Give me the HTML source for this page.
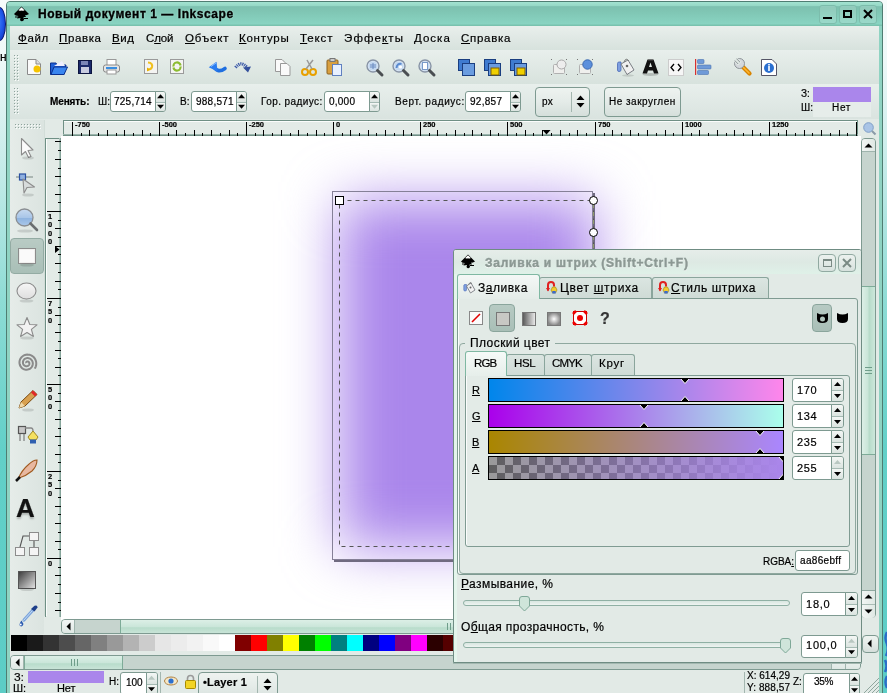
<!DOCTYPE html><html><head><meta charset="utf-8"><style>
*{margin:0;padding:0;box-sizing:border-box}
html,body{-webkit-font-smoothing:antialiased;width:887px;height:693px;overflow:hidden;position:relative;background:#f2f8f8;font-family:"Liberation Sans",sans-serif;font-size:12px;color:#000}
.ab{position:absolute}
.t{position:absolute;white-space:pre;line-height:1;will-change:transform;-webkit-text-stroke:0.2px currentColor}
u{text-decoration:underline;text-underline-offset:1px;text-decoration-thickness:1px}
.ent{position:absolute;background:#fff;border:1px solid #7e9a91;border-radius:3px 0 0 3px}
.spb{position:absolute;border:1px solid #7e9a91;border-radius:0 3px 3px 0;background:linear-gradient(180deg,#f0f4f2,#d9e2de)}
.btn{position:absolute;border:1px solid #7e9a91;border-radius:4px;background:linear-gradient(180deg,#eef3f0 0,#e4ebe8 50%,#d5dfdb 100%)}
svg{position:absolute;overflow:visible}
</style></head><body>
<div class="ab" style="left:0px;top:0px;width:887px;height:693px;background:linear-gradient(180deg,#f7fbfb 0,#eef8f8 60px,#c8ecea 160px,#8edcd5 300px,#62d0c8 450px,#5ccdc6 693px)"></div>
<div class="ab" style="left:-7px;top:7px;width:13px;height:34px;border-radius:50%;border:1px solid #0a1470;background:radial-gradient(ellipse at 40% 45%,#3a7cf8 0,#1f56e8 50%,#1038c0 85%,#0a1e90 100%)"></div>
<div class="t" style="left:0px;top:51px;font-size:12px;color:#000;">н</div>
<svg style="left:883px;top:630px;" width="6" height="63" viewBox="0 0 6 63"><path d="M4 2 Q1 8 4 14 Q6 20 3 26 M2 30 Q5 36 2 42 M4 46 Q1 52 4 58" stroke="#2a6ec8" stroke-width="2.5" fill="none"/></svg>
<div class="ab" style="left:6px;top:1px;width:877px;height:700px;background:#8fd3c2;border:1px solid #4f7d72;border-radius:4px 4px 0 0"></div>
<div class="ab" style="left:7px;top:2px;width:875px;height:24px;background:linear-gradient(180deg,#a3e3d1 0px,#95d7c5 4px,#7dc1b0 4.6px,#7fc5b3 9px,#89d4c2 22px,#79c2ae 23px,#79c2ae 24px);border-radius:3px 3px 0 0"></div>
<div class="ab" style="left:10px;top:26px;width:869px;height:670px;background:#e2eae6"></div>
<svg style="left:13px;top:6px;" width="17" height="17" viewBox="0 0 17 17"><path d="M8.5 0.5 L16 8 Q14 9.5 12 9 L13 11 L10.5 11 L11 14 Q8.5 16.5 7 14 L7.5 12 L4 12.5 L5.5 10 Q2 10 1 8 Z" fill="#000"/><path d="M8.5 1.2 L11.5 4.2 Q9.5 5.2 8.5 4.4 Q7.5 5.2 5.5 4.2 Z" fill="#fff"/><path d="M2 11 H6 M11 12.5 H15" stroke="#000" stroke-width="1"/></svg>
<div class="t" style="left:38px;top:8px;font-size:12px;color:#000;font-weight:bold;letter-spacing:0.56px;-webkit-text-stroke:0.35px #000;text-shadow:0 0 2px #c8f2e8">Новый документ 1 — Inkscape</div>
<div class="ab" style="left:819px;top:5px;width:18px;height:19px;border:1px solid #7cbdac;border-radius:3px;background:rgba(255,255,255,0.15)"></div>
<div class="ab" style="left:839px;top:5px;width:18px;height:19px;border:1px solid #7cbdac;border-radius:3px;background:rgba(255,255,255,0.15)"></div>
<div class="ab" style="left:859px;top:5px;width:18px;height:19px;border:1px solid #7cbdac;border-radius:3px;background:rgba(255,255,255,0.15)"></div>
<div class="ab" style="left:823px;top:17px;width:9px;height:2px;background:#000"></div>
<div class="ab" style="left:843px;top:10px;width:9px;height:8px;border:2px solid #000"></div>
<svg style="left:863px;top:9px;" width="10" height="10" viewBox="0 0 10 10"><path d="M1 1 L9 9 M9 1 L1 9" stroke="#000" stroke-width="2"/></svg>
<div class="ab" style="left:10px;top:26px;width:869px;height:24px;background:linear-gradient(180deg,#e9efec,#d7e2dd)"></div>
<div class="t" style="left:18px;top:33px;font-size:11.5px;color:#000;letter-spacing:0.67px;"><u>Ф</u>айл</div>
<div class="t" style="left:59px;top:33px;font-size:11.5px;color:#000;letter-spacing:0.63px;"><u>П</u>равка</div>
<div class="t" style="left:112px;top:33px;font-size:11.5px;color:#000;letter-spacing:0.59px;"><u>В</u>ид</div>
<div class="t" style="left:146px;top:33px;font-size:11.5px;color:#000;letter-spacing:-0.16px;">С<u>л</u>ой</div>
<div class="t" style="left:185px;top:33px;font-size:11.5px;color:#000;letter-spacing:0.87px;"><u>О</u>бъект</div>
<div class="t" style="left:239px;top:33px;font-size:11.5px;color:#000;letter-spacing:0.76px;"><u>К</u>онтуры</div>
<div class="t" style="left:300px;top:33px;font-size:11.5px;color:#000;letter-spacing:0.86px;"><u>Т</u>екст</div>
<div class="t" style="left:344px;top:33px;font-size:11.5px;color:#000;letter-spacing:1.12px;">Эффе<u>к</u>ты</div>
<div class="t" style="left:414px;top:33px;font-size:11.5px;color:#000;letter-spacing:1.01px;"><u>Д</u>оска</div>
<div class="t" style="left:461px;top:33px;font-size:11.5px;color:#000;letter-spacing:0.70px;"><u>С</u>правка</div>
<div class="ab" style="left:10px;top:50px;width:869px;height:34px;background:linear-gradient(180deg,#e8efec,#d7e2dd)"></div>
<div class="ab" style="left:10px;top:84px;width:869px;height:36px;background:linear-gradient(180deg,#e8efec,#d9e3df)"></div>
<svg style="left:14px;top:55px;" width="6" height="27" viewBox="0 0 6 27"><rect x="0" y="0" width="1" height="1" fill="#8ea39c"/><rect x="1" y="1" width="1" height="1" fill="#fbfdfc"/><rect x="0" y="3" width="1" height="1" fill="#8ea39c"/><rect x="1" y="4" width="1" height="1" fill="#fbfdfc"/><rect x="0" y="6" width="1" height="1" fill="#8ea39c"/><rect x="1" y="7" width="1" height="1" fill="#fbfdfc"/><rect x="0" y="9" width="1" height="1" fill="#8ea39c"/><rect x="1" y="10" width="1" height="1" fill="#fbfdfc"/><rect x="0" y="12" width="1" height="1" fill="#8ea39c"/><rect x="1" y="13" width="1" height="1" fill="#fbfdfc"/><rect x="0" y="15" width="1" height="1" fill="#8ea39c"/><rect x="1" y="16" width="1" height="1" fill="#fbfdfc"/><rect x="0" y="18" width="1" height="1" fill="#8ea39c"/><rect x="1" y="19" width="1" height="1" fill="#fbfdfc"/><rect x="0" y="21" width="1" height="1" fill="#8ea39c"/><rect x="1" y="22" width="1" height="1" fill="#fbfdfc"/><rect x="0" y="24" width="1" height="1" fill="#8ea39c"/><rect x="1" y="25" width="1" height="1" fill="#fbfdfc"/><rect x="3" y="0" width="1" height="1" fill="#8ea39c"/><rect x="4" y="1" width="1" height="1" fill="#fbfdfc"/><rect x="3" y="3" width="1" height="1" fill="#8ea39c"/><rect x="4" y="4" width="1" height="1" fill="#fbfdfc"/><rect x="3" y="6" width="1" height="1" fill="#8ea39c"/><rect x="4" y="7" width="1" height="1" fill="#fbfdfc"/><rect x="3" y="9" width="1" height="1" fill="#8ea39c"/><rect x="4" y="10" width="1" height="1" fill="#fbfdfc"/><rect x="3" y="12" width="1" height="1" fill="#8ea39c"/><rect x="4" y="13" width="1" height="1" fill="#fbfdfc"/><rect x="3" y="15" width="1" height="1" fill="#8ea39c"/><rect x="4" y="16" width="1" height="1" fill="#fbfdfc"/><rect x="3" y="18" width="1" height="1" fill="#8ea39c"/><rect x="4" y="19" width="1" height="1" fill="#fbfdfc"/><rect x="3" y="21" width="1" height="1" fill="#8ea39c"/><rect x="4" y="22" width="1" height="1" fill="#fbfdfc"/><rect x="3" y="24" width="1" height="1" fill="#8ea39c"/><rect x="4" y="25" width="1" height="1" fill="#fbfdfc"/></svg>
<svg style="left:14px;top:88px;" width="6" height="27" viewBox="0 0 6 27"><rect x="0" y="0" width="1" height="1" fill="#8ea39c"/><rect x="1" y="1" width="1" height="1" fill="#fbfdfc"/><rect x="0" y="3" width="1" height="1" fill="#8ea39c"/><rect x="1" y="4" width="1" height="1" fill="#fbfdfc"/><rect x="0" y="6" width="1" height="1" fill="#8ea39c"/><rect x="1" y="7" width="1" height="1" fill="#fbfdfc"/><rect x="0" y="9" width="1" height="1" fill="#8ea39c"/><rect x="1" y="10" width="1" height="1" fill="#fbfdfc"/><rect x="0" y="12" width="1" height="1" fill="#8ea39c"/><rect x="1" y="13" width="1" height="1" fill="#fbfdfc"/><rect x="0" y="15" width="1" height="1" fill="#8ea39c"/><rect x="1" y="16" width="1" height="1" fill="#fbfdfc"/><rect x="0" y="18" width="1" height="1" fill="#8ea39c"/><rect x="1" y="19" width="1" height="1" fill="#fbfdfc"/><rect x="0" y="21" width="1" height="1" fill="#8ea39c"/><rect x="1" y="22" width="1" height="1" fill="#fbfdfc"/><rect x="0" y="24" width="1" height="1" fill="#8ea39c"/><rect x="1" y="25" width="1" height="1" fill="#fbfdfc"/><rect x="3" y="0" width="1" height="1" fill="#8ea39c"/><rect x="4" y="1" width="1" height="1" fill="#fbfdfc"/><rect x="3" y="3" width="1" height="1" fill="#8ea39c"/><rect x="4" y="4" width="1" height="1" fill="#fbfdfc"/><rect x="3" y="6" width="1" height="1" fill="#8ea39c"/><rect x="4" y="7" width="1" height="1" fill="#fbfdfc"/><rect x="3" y="9" width="1" height="1" fill="#8ea39c"/><rect x="4" y="10" width="1" height="1" fill="#fbfdfc"/><rect x="3" y="12" width="1" height="1" fill="#8ea39c"/><rect x="4" y="13" width="1" height="1" fill="#fbfdfc"/><rect x="3" y="15" width="1" height="1" fill="#8ea39c"/><rect x="4" y="16" width="1" height="1" fill="#fbfdfc"/><rect x="3" y="18" width="1" height="1" fill="#8ea39c"/><rect x="4" y="19" width="1" height="1" fill="#fbfdfc"/><rect x="3" y="21" width="1" height="1" fill="#8ea39c"/><rect x="4" y="22" width="1" height="1" fill="#fbfdfc"/><rect x="3" y="24" width="1" height="1" fill="#8ea39c"/><rect x="4" y="25" width="1" height="1" fill="#fbfdfc"/></svg>
<svg style="left:27px;top:59px;" width="14" height="16" viewBox="0 0 14 16"><path d="M0.5 0.5 H9 L13.5 5 V15.5 H0.5 Z" fill="#fafafa" stroke="#8a8a8a"/><path d="M9 0.5 V5 H13.5" fill="#ddd" stroke="#8a8a8a"/></svg>
<svg style="left:33px;top:65px;" width="8" height="8" viewBox="0 0 8 8"><circle cx="4" cy="4" r="3.5" fill="#f5c400"/></svg>
<svg style="left:50px;top:60px;" width="18" height="15" viewBox="0 0 18 15"><path d="M0.5 3 H6 L7 5 H16 L14 14.5 H0.5 Z" fill="#1f5fd6" stroke="#0a3090"/><path d="M4 6 L12 1 L15 6 Z" fill="#eef"/><path d="M1 14.5 L4 7 H17.5 L14 14.5 Z" fill="#3a86f0" stroke="#0a3090"/></svg>
<svg style="left:78px;top:60px;" width="14" height="14" viewBox="0 0 14 14"><rect x="0.5" y="0.5" width="13" height="13" fill="#1b2a6b" stroke="#0d1540"/><rect x="3" y="7" width="8" height="6" fill="#c8cce0"/><rect x="3" y="1" width="7" height="4" fill="#7b86b8"/></svg>
<svg style="left:103px;top:59px;" width="17" height="16" viewBox="0 0 17 16"><rect x="4" y="0.5" width="9" height="7" fill="#fff" stroke="#999"/><rect x="0.5" y="6" width="16" height="7" rx="2" fill="#e6e6e6" stroke="#888"/><rect x="3" y="8" width="11" height="2" fill="#3a8ee0"/><rect x="4" y="11" width="9" height="4" fill="#fff" stroke="#999"/></svg>
<svg style="left:144px;top:59px;" width="14" height="15" viewBox="0 0 14 15"><rect x="0.5" y="0.5" width="13" height="14" fill="#f4f4f2" stroke="#9a9a9a"/><path d="M4 3.5 Q9 4 8 8 Q7 11 3.5 10.5" stroke="#f0c020" stroke-width="2.2" fill="none"/><path d="M6 10.5 L3 12.5 L3 8.5 Z" fill="#e8b000"/></svg>
<svg style="left:170px;top:59px;" width="14" height="15" viewBox="0 0 14 15"><rect x="0.5" y="0.5" width="13" height="14" fill="#f4f4f2" stroke="#9a9a9a"/><path d="M3.5 7.5 A3.5 3.5 0 0 1 10.5 6.5 M10.5 7.5 A3.5 3.5 0 0 1 3.5 8.5" stroke="#8cbc30" stroke-width="2.2" fill="none"/></svg>
<svg style="left:208px;top:61px;" width="18" height="12" viewBox="0 0 18 12"><path d="M6 6 Q10 12.5 17 7.5" stroke="#1f6fe0" stroke-width="3.6" fill="none" stroke-linecap="round"/><path d="M0.8 6.2 L8.5 0.8 L9.5 10.5 Z" fill="#2a7cf0"/><path d="M3 5.5 L8 2" stroke="#8ec0ff" stroke-width="1"/></svg>
<svg style="left:234px;top:61px;" width="18" height="12" viewBox="0 0 18 12"><path d="M1.5 6.5 Q7 -0.5 12.5 6" stroke="#3a58a8" stroke-width="3.2" fill="none" stroke-dasharray="1.2 0.8"/><path d="M9 6.5 L17 5.5 L14 11.5 Z" fill="#34509c"/></svg>
<svg style="left:275px;top:59px;" width="16" height="17" viewBox="0 0 16 17"><path d="M0.5 0.5 H7 L10 3.5 V12.5 H0.5 Z" fill="#fafafa" stroke="#999"/><path d="M5.5 4.5 H12 L15 7.5 V16.5 H5.5 Z" fill="#fafafa" stroke="#999"/></svg>
<svg style="left:301px;top:59px;" width="16" height="17" viewBox="0 0 16 17"><circle cx="4" cy="13" r="3" fill="none" stroke="#e8a000" stroke-width="2"/><circle cx="12" cy="13" r="3" fill="none" stroke="#e8a000" stroke-width="2"/><path d="M5 10 L12 1 M11 10 L6 1" stroke="#999" stroke-width="1.5"/></svg>
<svg style="left:326px;top:58px;" width="17" height="18" viewBox="0 0 17 18"><rect x="1" y="2" width="11" height="14" rx="1" fill="#d9a040" stroke="#8a6020"/><rect x="4" y="0.5" width="5" height="3" fill="#ccc" stroke="#777"/><rect x="6.5" y="6.5" width="9" height="11" fill="#e8f0ff" stroke="#6080c0"/></svg>
<svg style="left:366px;top:59px;" width="18" height="18" viewBox="0 0 18 18"><circle cx="7" cy="7" r="6" fill="#dce8f6" stroke="#8894a6" stroke-width="1.4"/><circle cx="7" cy="7" r="4.6" fill="#c4d8f0"/><path d="M4 6 H10 M4 8 H10 M7 4 V10" stroke="#6a8ac0" stroke-width="1"/><path d="M11.5 11.5 L16 16" stroke="#4a4e52" stroke-width="3" stroke-linecap="round"/></svg>
<svg style="left:392px;top:59px;" width="18" height="18" viewBox="0 0 18 18"><circle cx="7" cy="7" r="6" fill="#dce8f6" stroke="#8894a6" stroke-width="1.4"/><circle cx="7" cy="7" r="4.6" fill="#c4d8f0"/><path d="M4.5 9 Q5 4 9.5 5" stroke="#5a8ad0" stroke-width="2" fill="none"/><circle cx="8.5" cy="8" r="1.6" fill="#fff"/><path d="M11.5 11.5 L16 16" stroke="#4a4e52" stroke-width="3" stroke-linecap="round"/></svg>
<svg style="left:418px;top:59px;" width="18" height="18" viewBox="0 0 18 18"><circle cx="7" cy="7" r="6" fill="#dce8f6" stroke="#8894a6" stroke-width="1.4"/><circle cx="7" cy="7" r="4.6" fill="#c4d8f0"/><rect x="4.5" y="3.5" width="5" height="7" fill="#fff" stroke="#7a9ac8"/><path d="M11.5 11.5 L16 16" stroke="#4a4e52" stroke-width="3" stroke-linecap="round"/></svg>
<svg style="left:458px;top:59px;" width="17" height="17" viewBox="0 0 17 17"><rect x="0.5" y="0.5" width="11" height="11" fill="#3f7bd0" stroke="#1a3e80"/><rect x="4.5" y="4.5" width="12" height="12" fill="#6a9ce0" stroke="#1a3e80"/></svg>
<svg style="left:484px;top:59px;" width="17" height="17" viewBox="0 0 17 17"><rect x="0.5" y="0.5" width="11" height="11" fill="#3f7bd0" stroke="#1a3e80"/><rect x="4.5" y="4.5" width="12" height="12" fill="#6a9ce0" stroke="#1a3e80"/><rect x="7" y="9" width="8" height="7" fill="#f0d000" stroke="#806000"/></svg>
<svg style="left:510px;top:59px;" width="17" height="17" viewBox="0 0 17 17"><rect x="0.5" y="0.5" width="11" height="11" fill="#3f7bd0" stroke="#1a3e80"/><rect x="4.5" y="4.5" width="12" height="12" fill="#6a9ce0" stroke="#1a3e80"/><rect x="7" y="9" width="8" height="7" fill="#f0d000" stroke="#806000"/></svg>
<svg style="left:551px;top:59px;" width="17" height="17" viewBox="0 0 17 17"><rect x="0" y="0" width="1" height="1" fill="#777"/><rect x="15" y="0" width="1" height="1" fill="#777"/><rect x="0" y="15" width="1" height="1" fill="#777"/><rect x="15" y="15" width="1" height="1" fill="#777"/><rect x="2.5" y="5.5" width="11" height="9" rx="1" fill="#efefed" stroke="#b0b0b0"/><circle cx="10.5" cy="5.5" r="4.5" fill="#ededed" stroke="#a8a8a8"/></svg>
<svg style="left:577px;top:59px;" width="17" height="17" viewBox="0 0 17 17"><rect x="0" y="0" width="1" height="1" fill="#777"/><rect x="15" y="0" width="1" height="1" fill="#777"/><rect x="0" y="15" width="1" height="1" fill="#777"/><rect x="15" y="15" width="1" height="1" fill="#777"/><rect x="2.5" y="5.5" width="11" height="9" rx="1" fill="#efefed" stroke="#b0b0b0"/><circle cx="10.5" cy="5.5" r="4.7" fill="#5b8fdc" stroke="#3b68b0"/></svg>
<svg style="left:616px;top:58px;" width="20" height="19" viewBox="0 0 20 19"><path d="M1.5 5.5 Q1.5 4 3 4 H5 V12 Q5 13.5 3 13.5 Q1.5 13.5 1.5 12 Z" fill="#7e9fe0" stroke="#4a6ab8" stroke-width="0.8"/><path d="M5 6 L12 2 L18 12 L11 16.5 Z" fill="#f0f0f0" stroke="#7a7e84" stroke-width="1"/><path d="M8 4 Q10 -1 13 3" stroke="#777" stroke-width="1" fill="none"/><circle cx="11" cy="8" r="1.3" fill="#666"/><ellipse cx="12" cy="17.5" rx="6" ry="1.2" fill="#000" opacity="0.12"/></svg>
<svg style="left:642px;top:59px;" width="17" height="17" viewBox="0 0 17 17"><ellipse cx="8.5" cy="15.5" rx="8" ry="1.5" fill="#000" opacity="0.18"/><path d="M5.5 0.5 H11.5 L16.5 14.5 H12 L11 11.5 H6 L5 14.5 H0.5 Z M7 8 H10 L8.5 3.5 Z" fill="#111" fill-rule="evenodd"/><path d="M6 1 H11" stroke="#666" stroke-width="0.8"/></svg>
<svg style="left:668px;top:59px;" width="16" height="17" viewBox="0 0 16 17"><rect x="0.5" y="0.5" width="15" height="16" fill="#f6f6f6" stroke="#ccc"/><path d="M6 5 L3 8.5 L6 12 M10 5 L13 8.5 L10 12" stroke="#000" stroke-width="1.3" fill="none"/></svg>
<svg style="left:695px;top:59px;" width="17" height="17" viewBox="0 0 17 17"><rect x="0" y="0" width="1.2" height="16" fill="#d83030"/><rect x="2.5" y="0.5" width="6.5" height="4" rx="0.8" fill="#6f9ad8" stroke="#4a72b0" stroke-width="0.6"/><rect x="2.5" y="6" width="13.5" height="4" rx="0.8" fill="#6f9ad8" stroke="#4a72b0" stroke-width="0.6"/><rect x="2.5" y="11.5" width="11" height="4" rx="0.8" fill="#6f9ad8" stroke="#4a72b0" stroke-width="0.6"/></svg>
<svg style="left:734px;top:58px;" width="18" height="18" viewBox="0 0 18 18"><path d="M8 8 L15.5 15.5" stroke="#d88400" stroke-width="4.2" stroke-linecap="round"/><path d="M8.5 8.5 L15 15" stroke="#ffb630" stroke-width="1.6" stroke-linecap="round"/><circle cx="5.5" cy="5.5" r="5" fill="#d4d8dc" stroke="#858b90" stroke-width="0.9"/><path d="M0 3.5 L3.5 0 L7.5 4 L4 7.5 Z" fill="#e0e8e4"/><path d="M0.8 2.6 L4.2 6 M2.6 0.8 L6 4.2" stroke="#858b90" stroke-width="0.9"/></svg>
<svg style="left:761px;top:59px;" width="16" height="17" viewBox="0 0 16 17"><path d="M0.5 0.5 H11 L15.5 5 V16.5 H0.5 Z" fill="#fff" stroke="#556"/><circle cx="8" cy="9" r="5" fill="#2a6fd0"/><rect x="7.2" y="7" width="1.6" height="5" fill="#fff"/><rect x="7.2" y="5" width="1.6" height="1.5" fill="#fff"/></svg>
<div class="t" style="left:50px;top:97px;font-size:10px;color:#000;font-weight:bold;letter-spacing:-0.11px;">Менять:</div>
<div class="t" style="left:98px;top:97px;font-size:10px;color:#000;">Ш:</div>
<div class="ent" style="left:110px;top:91px;width:46px;height:21px"></div>
<div class="ab" style="left:155px;top:91px;width:11px;height:21px;border:1px solid #7e9a91;border-radius:0 3px 3px 0;overflow:hidden"><div style="height:50%;background:linear-gradient(180deg,#f4f7f5,#dbe4e0)"></div><div style="height:50%;border-top:1px solid #a5bab3;background:linear-gradient(180deg,#f4f7f5,#dbe4e0)"></div></div>
<svg style="left:157px;top:91px;" width="7" height="21" viewBox="0 0 7 21"><path d="M0 7.2 L3.5 3.2 L7 7.2 Z" fill="#000"/><path d="M0 13.8 L3.5 17.8 L7 13.8 Z" fill="#000"/></svg>
<div class="t" style="left:114px;top:97px;font-size:10px;color:#000;letter-spacing:0.24px;">725,714</div>
<div class="t" style="left:180px;top:97px;font-size:10px;color:#000;">В:</div>
<div class="ent" style="left:191px;top:91px;width:46px;height:21px"></div>
<div class="ab" style="left:236px;top:91px;width:11px;height:21px;border:1px solid #7e9a91;border-radius:0 3px 3px 0;overflow:hidden"><div style="height:50%;background:linear-gradient(180deg,#f4f7f5,#dbe4e0)"></div><div style="height:50%;border-top:1px solid #a5bab3;background:linear-gradient(180deg,#f4f7f5,#dbe4e0)"></div></div>
<svg style="left:238px;top:91px;" width="7" height="21" viewBox="0 0 7 21"><path d="M0 7.2 L3.5 3.2 L7 7.2 Z" fill="#000"/><path d="M0 13.8 L3.5 17.8 L7 13.8 Z" fill="#000"/></svg>
<div class="t" style="left:196px;top:97px;font-size:10px;color:#000;letter-spacing:0.24px;">988,571</div>
<div class="t" style="left:261px;top:97px;font-size:10px;color:#000;letter-spacing:0.42px;">Гор. радиус:</div>
<div class="ent" style="left:324px;top:91px;width:46px;height:21px"></div>
<div class="ab" style="left:369px;top:91px;width:11px;height:21px;border:1px solid #7e9a91;border-radius:0 3px 3px 0;overflow:hidden"><div style="height:50%;background:linear-gradient(180deg,#f4f7f5,#dbe4e0)"></div><div style="height:50%;border-top:1px solid #a5bab3;background:linear-gradient(180deg,#f4f7f5,#dbe4e0)"></div></div>
<svg style="left:371px;top:91px;" width="7" height="21" viewBox="0 0 7 21"><path d="M0 7.2 L3.5 3.2 L7 7.2 Z" fill="#000"/><path d="M0 13.8 L3.5 17.8 L7 13.8 Z" fill="#b8c7c1"/></svg>
<div class="t" style="left:329px;top:97px;font-size:10px;color:#000;letter-spacing:0.24px;">0,000</div>
<div class="t" style="left:395px;top:97px;font-size:10px;color:#000;letter-spacing:0.62px;">Верт. радиус:</div>
<div class="ent" style="left:465px;top:91px;width:46px;height:21px"></div>
<div class="ab" style="left:510px;top:91px;width:11px;height:21px;border:1px solid #7e9a91;border-radius:0 3px 3px 0;overflow:hidden"><div style="height:50%;background:linear-gradient(180deg,#f4f7f5,#dbe4e0)"></div><div style="height:50%;border-top:1px solid #a5bab3;background:linear-gradient(180deg,#f4f7f5,#dbe4e0)"></div></div>
<svg style="left:512px;top:91px;" width="7" height="21" viewBox="0 0 7 21"><path d="M0 7.2 L3.5 3.2 L7 7.2 Z" fill="#000"/><path d="M0 13.8 L3.5 17.8 L7 13.8 Z" fill="#000"/></svg>
<div class="t" style="left:470px;top:97px;font-size:10px;color:#000;letter-spacing:0.28px;">92,857</div>
<div class="btn" style="left:535px;top:87px;width:55px;height:30px"></div>
<div class="t" style="left:542px;top:97px;font-size:10px;color:#000;letter-spacing:0.14px;">px</div>
<div class="ab" style="left:571px;top:92px;width:1px;height:20px;background:#a3b6af"></div>
<svg style="left:576px;top:95px;" width="9" height="13" viewBox="0 0 9 13"><path d="M0.5 5 L4.5 0.5 L8.5 5 Z M0.5 8 L4.5 12.5 L8.5 8 Z" fill="#000"/></svg>
<div class="btn" style="left:604px;top:87px;width:77px;height:30px"></div>
<div class="t" style="left:609px;top:97px;font-size:10px;color:#000;letter-spacing:0.49px;">Не закруглен</div>
<div class="ab" style="left:813px;top:87px;width:58px;height:15px;background:#aa86eb"></div>
<div class="ab" style="left:813px;top:102px;width:58px;height:15px;background:#e6edea"></div>
<div class="t" style="left:801px;top:89px;font-size:10px;color:#000;">З:</div>
<div class="t" style="left:801px;top:103px;font-size:10px;color:#000;">Ш:</div>
<div class="t" style="left:832px;top:103px;font-size:10px;color:#000;letter-spacing:0.68px;">Нет</div>
<div class="ab" style="left:10px;top:119px;width:869px;height:577px;background:#e2eae6"></div>
<div class="ab" style="left:63px;top:120px;width:795px;height:16px;background:#e3ebe7;border:1px solid #6f9085;border-bottom:none;border-right:1px solid #6f9085"></div>
<div class="ab" style="left:64px;top:121px;width:793px;height:1px;background:#fbfdfc"></div>
<div class="ab" style="left:63px;top:134px;width:795px;height:1px;background:#9bb5ac"></div>
<div class="ab" style="left:63px;top:135px;width:795px;height:1px;background:#6f8f85"></div>
<svg style="left:63px;top:122px;" width="795" height="14" viewBox="0 0 795 14"><rect x="9" y="0" width="1" height="14" fill="#000"/><rect x="18" y="11" width="1" height="3" fill="#000"/><rect x="26" y="8" width="1" height="6" fill="#000"/><rect x="35" y="11" width="1" height="3" fill="#000"/><rect x="44" y="8" width="1" height="6" fill="#000"/><rect x="53" y="11" width="1" height="3" fill="#000"/><rect x="61" y="8" width="1" height="6" fill="#000"/><rect x="70" y="11" width="1" height="3" fill="#000"/><rect x="79" y="8" width="1" height="6" fill="#000"/><rect x="87" y="11" width="1" height="3" fill="#000"/><rect x="96" y="0" width="1" height="14" fill="#000"/><rect x="105" y="11" width="1" height="3" fill="#000"/><rect x="113" y="8" width="1" height="6" fill="#000"/><rect x="122" y="11" width="1" height="3" fill="#000"/><rect x="131" y="8" width="1" height="6" fill="#000"/><rect x="139" y="11" width="1" height="3" fill="#000"/><rect x="148" y="8" width="1" height="6" fill="#000"/><rect x="157" y="11" width="1" height="3" fill="#000"/><rect x="166" y="8" width="1" height="6" fill="#000"/><rect x="174" y="11" width="1" height="3" fill="#000"/><rect x="183" y="0" width="1" height="14" fill="#000"/><rect x="192" y="11" width="1" height="3" fill="#000"/><rect x="200" y="8" width="1" height="6" fill="#000"/><rect x="209" y="11" width="1" height="3" fill="#000"/><rect x="218" y="8" width="1" height="6" fill="#000"/><rect x="227" y="11" width="1" height="3" fill="#000"/><rect x="235" y="8" width="1" height="6" fill="#000"/><rect x="244" y="11" width="1" height="3" fill="#000"/><rect x="253" y="8" width="1" height="6" fill="#000"/><rect x="261" y="11" width="1" height="3" fill="#000"/><rect x="270" y="0" width="1" height="14" fill="#000"/><rect x="279" y="11" width="1" height="3" fill="#000"/><rect x="287" y="8" width="1" height="6" fill="#000"/><rect x="296" y="11" width="1" height="3" fill="#000"/><rect x="305" y="8" width="1" height="6" fill="#000"/><rect x="313" y="11" width="1" height="3" fill="#000"/><rect x="322" y="8" width="1" height="6" fill="#000"/><rect x="331" y="11" width="1" height="3" fill="#000"/><rect x="340" y="8" width="1" height="6" fill="#000"/><rect x="348" y="11" width="1" height="3" fill="#000"/><rect x="357" y="0" width="1" height="14" fill="#000"/><rect x="366" y="11" width="1" height="3" fill="#000"/><rect x="374" y="8" width="1" height="6" fill="#000"/><rect x="383" y="11" width="1" height="3" fill="#000"/><rect x="392" y="8" width="1" height="6" fill="#000"/><rect x="401" y="11" width="1" height="3" fill="#000"/><rect x="409" y="8" width="1" height="6" fill="#000"/><rect x="418" y="11" width="1" height="3" fill="#000"/><rect x="427" y="8" width="1" height="6" fill="#000"/><rect x="435" y="11" width="1" height="3" fill="#000"/><rect x="444" y="0" width="1" height="14" fill="#000"/><rect x="453" y="11" width="1" height="3" fill="#000"/><rect x="462" y="8" width="1" height="6" fill="#000"/><rect x="470" y="11" width="1" height="3" fill="#000"/><rect x="479" y="8" width="1" height="6" fill="#000"/><rect x="488" y="11" width="1" height="3" fill="#000"/><rect x="497" y="8" width="1" height="6" fill="#000"/><rect x="506" y="11" width="1" height="3" fill="#000"/><rect x="514" y="8" width="1" height="6" fill="#000"/><rect x="523" y="11" width="1" height="3" fill="#000"/><rect x="532" y="0" width="1" height="14" fill="#000"/><rect x="541" y="11" width="1" height="3" fill="#000"/><rect x="549" y="8" width="1" height="6" fill="#000"/><rect x="558" y="11" width="1" height="3" fill="#000"/><rect x="567" y="8" width="1" height="6" fill="#000"/><rect x="575" y="11" width="1" height="3" fill="#000"/><rect x="584" y="8" width="1" height="6" fill="#000"/><rect x="593" y="11" width="1" height="3" fill="#000"/><rect x="602" y="8" width="1" height="6" fill="#000"/><rect x="610" y="11" width="1" height="3" fill="#000"/><rect x="619" y="0" width="1" height="14" fill="#000"/><rect x="628" y="11" width="1" height="3" fill="#000"/><rect x="636" y="8" width="1" height="6" fill="#000"/><rect x="645" y="11" width="1" height="3" fill="#000"/><rect x="654" y="8" width="1" height="6" fill="#000"/><rect x="663" y="11" width="1" height="3" fill="#000"/><rect x="671" y="8" width="1" height="6" fill="#000"/><rect x="680" y="11" width="1" height="3" fill="#000"/><rect x="689" y="8" width="1" height="6" fill="#000"/><rect x="697" y="11" width="1" height="3" fill="#000"/><rect x="706" y="0" width="1" height="14" fill="#000"/><rect x="715" y="11" width="1" height="3" fill="#000"/><rect x="723" y="8" width="1" height="6" fill="#000"/><rect x="732" y="11" width="1" height="3" fill="#000"/><rect x="741" y="8" width="1" height="6" fill="#000"/><rect x="749" y="11" width="1" height="3" fill="#000"/><rect x="758" y="8" width="1" height="6" fill="#000"/><rect x="767" y="11" width="1" height="3" fill="#000"/><rect x="776" y="8" width="1" height="6" fill="#000"/><rect x="784" y="11" width="1" height="3" fill="#000"/><rect x="793" y="0" width="1" height="14" fill="#000"/></svg>
<div class="t" style="left:75px;top:121px;font-size:7.5px;color:#000;font-weight:bold;">-750</div>
<div class="t" style="left:162px;top:121px;font-size:7.5px;color:#000;font-weight:bold;">-500</div>
<div class="t" style="left:249px;top:121px;font-size:7.5px;color:#000;font-weight:bold;">-250</div>
<div class="t" style="left:336px;top:121px;font-size:7.5px;color:#000;font-weight:bold;">0</div>
<div class="t" style="left:423px;top:121px;font-size:7.5px;color:#000;font-weight:bold;">250</div>
<div class="t" style="left:510px;top:121px;font-size:7.5px;color:#000;font-weight:bold;">500</div>
<div class="t" style="left:598px;top:121px;font-size:7.5px;color:#000;font-weight:bold;">750</div>
<div class="t" style="left:685px;top:121px;font-size:7.5px;color:#000;font-weight:bold;">1000</div>
<div class="t" style="left:772px;top:121px;font-size:7.5px;color:#000;font-weight:bold;">1250</div>
<svg style="left:542px;top:130px;" width="9" height="5" viewBox="0 0 9 5"><path d="M0.5 0 H8.5 L4.5 4.5 Z" fill="#000"/></svg>
<svg style="left:863px;top:122px;" width="13" height="13" viewBox="0 0 13 13"><circle cx="5.5" cy="5.5" r="4.8" fill="#a9c4e6" stroke="#7f9fc8" stroke-width="1"/><path d="M9 9 L12.5 12.5" stroke="#8a9aa8" stroke-width="2"/></svg>
<div class="ab" style="left:45px;top:138px;width:16px;height:479px;background:#e3ebe7;border:1px solid #6f9085;border-bottom:none;border-right:none"></div>
<div class="ab" style="left:46px;top:139px;width:1px;height:477px;background:#fbfdfc"></div>
<div class="ab" style="left:59px;top:138px;width:1px;height:479px;background:#adc4bc"></div>
<div class="ab" style="left:60px;top:138px;width:1px;height:479px;background:#85a49a"></div>
<svg style="left:47px;top:138px;" width="14" height="479" viewBox="0 0 14 479"><rect x="8" y="3" width="6" height="1" fill="#000"/><rect x="11" y="12" width="3" height="1" fill="#000"/><rect x="8" y="21" width="6" height="1" fill="#000"/><rect x="11" y="30" width="3" height="1" fill="#000"/><rect x="8" y="38" width="6" height="1" fill="#000"/><rect x="11" y="47" width="3" height="1" fill="#000"/><rect x="8" y="56" width="6" height="1" fill="#000"/><rect x="11" y="64" width="3" height="1" fill="#000"/><rect x="0" y="73" width="14" height="1" fill="#000"/><rect x="11" y="82" width="3" height="1" fill="#000"/><rect x="8" y="90" width="6" height="1" fill="#000"/><rect x="11" y="99" width="3" height="1" fill="#000"/><rect x="8" y="108" width="6" height="1" fill="#000"/><rect x="11" y="116" width="3" height="1" fill="#000"/><rect x="8" y="125" width="6" height="1" fill="#000"/><rect x="11" y="134" width="3" height="1" fill="#000"/><rect x="8" y="143" width="6" height="1" fill="#000"/><rect x="11" y="151" width="3" height="1" fill="#000"/><rect x="0" y="160" width="14" height="1" fill="#000"/><rect x="11" y="169" width="3" height="1" fill="#000"/><rect x="8" y="177" width="6" height="1" fill="#000"/><rect x="11" y="186" width="3" height="1" fill="#000"/><rect x="8" y="194" width="6" height="1" fill="#000"/><rect x="11" y="203" width="3" height="1" fill="#000"/><rect x="8" y="212" width="6" height="1" fill="#000"/><rect x="11" y="220" width="3" height="1" fill="#000"/><rect x="8" y="229" width="6" height="1" fill="#000"/><rect x="11" y="237" width="3" height="1" fill="#000"/><rect x="0" y="246" width="14" height="1" fill="#000"/><rect x="11" y="255" width="3" height="1" fill="#000"/><rect x="8" y="263" width="6" height="1" fill="#000"/><rect x="11" y="272" width="3" height="1" fill="#000"/><rect x="8" y="281" width="6" height="1" fill="#000"/><rect x="11" y="290" width="3" height="1" fill="#000"/><rect x="8" y="298" width="6" height="1" fill="#000"/><rect x="11" y="307" width="3" height="1" fill="#000"/><rect x="8" y="316" width="6" height="1" fill="#000"/><rect x="11" y="324" width="3" height="1" fill="#000"/><rect x="0" y="333" width="14" height="1" fill="#000"/><rect x="11" y="342" width="3" height="1" fill="#000"/><rect x="8" y="350" width="6" height="1" fill="#000"/><rect x="11" y="359" width="3" height="1" fill="#000"/><rect x="8" y="368" width="6" height="1" fill="#000"/><rect x="11" y="376" width="3" height="1" fill="#000"/><rect x="8" y="385" width="6" height="1" fill="#000"/><rect x="11" y="394" width="3" height="1" fill="#000"/><rect x="8" y="403" width="6" height="1" fill="#000"/><rect x="11" y="411" width="3" height="1" fill="#000"/><rect x="0" y="420" width="14" height="1" fill="#000"/><rect x="11" y="429" width="3" height="1" fill="#000"/><rect x="8" y="437" width="6" height="1" fill="#000"/><rect x="11" y="446" width="3" height="1" fill="#000"/><rect x="8" y="455" width="6" height="1" fill="#000"/><rect x="11" y="464" width="3" height="1" fill="#000"/><rect x="8" y="472" width="6" height="1" fill="#000"/></svg>
<div class="t" style="left:48px;top:213px;font-size:7.5px;color:#000;font-weight:bold;">1</div>
<div class="t" style="left:48px;top:221px;font-size:7.5px;color:#000;font-weight:bold;">0</div>
<div class="t" style="left:48px;top:230px;font-size:7.5px;color:#000;font-weight:bold;">0</div>
<div class="t" style="left:48px;top:238px;font-size:7.5px;color:#000;font-weight:bold;">0</div>
<div class="t" style="left:48px;top:300px;font-size:7.5px;color:#000;font-weight:bold;">7</div>
<div class="t" style="left:48px;top:308px;font-size:7.5px;color:#000;font-weight:bold;">5</div>
<div class="t" style="left:48px;top:317px;font-size:7.5px;color:#000;font-weight:bold;">0</div>
<div class="t" style="left:48px;top:386px;font-size:7.5px;color:#000;font-weight:bold;">5</div>
<div class="t" style="left:48px;top:394px;font-size:7.5px;color:#000;font-weight:bold;">0</div>
<div class="t" style="left:48px;top:403px;font-size:7.5px;color:#000;font-weight:bold;">0</div>
<div class="t" style="left:48px;top:473px;font-size:7.5px;color:#000;font-weight:bold;">2</div>
<div class="t" style="left:48px;top:481px;font-size:7.5px;color:#000;font-weight:bold;">5</div>
<div class="t" style="left:48px;top:490px;font-size:7.5px;color:#000;font-weight:bold;">0</div>
<div class="t" style="left:48px;top:560px;font-size:7.5px;color:#000;font-weight:bold;">0</div>
<svg style="left:55px;top:246px;" width="5" height="7" viewBox="0 0 5 7"><path d="M0 0 V7 L4.5 3.5 Z" fill="#000"/></svg>
<div class="ab" style="left:10px;top:120px;width:34px;height:514px;background:linear-gradient(90deg,#e6ece9,#dbe4e0)"></div>
<svg style="left:15px;top:124px;" width="27" height="6" viewBox="0 0 27 6"><rect x="0" y="0" width="1" height="1" fill="#8ea39c"/><rect x="1" y="1" width="1" height="1" fill="#fbfdfc"/><rect x="0" y="3" width="1" height="1" fill="#8ea39c"/><rect x="1" y="4" width="1" height="1" fill="#fbfdfc"/><rect x="3" y="0" width="1" height="1" fill="#8ea39c"/><rect x="4" y="1" width="1" height="1" fill="#fbfdfc"/><rect x="3" y="3" width="1" height="1" fill="#8ea39c"/><rect x="4" y="4" width="1" height="1" fill="#fbfdfc"/><rect x="6" y="0" width="1" height="1" fill="#8ea39c"/><rect x="7" y="1" width="1" height="1" fill="#fbfdfc"/><rect x="6" y="3" width="1" height="1" fill="#8ea39c"/><rect x="7" y="4" width="1" height="1" fill="#fbfdfc"/><rect x="9" y="0" width="1" height="1" fill="#8ea39c"/><rect x="10" y="1" width="1" height="1" fill="#fbfdfc"/><rect x="9" y="3" width="1" height="1" fill="#8ea39c"/><rect x="10" y="4" width="1" height="1" fill="#fbfdfc"/><rect x="12" y="0" width="1" height="1" fill="#8ea39c"/><rect x="13" y="1" width="1" height="1" fill="#fbfdfc"/><rect x="12" y="3" width="1" height="1" fill="#8ea39c"/><rect x="13" y="4" width="1" height="1" fill="#fbfdfc"/><rect x="15" y="0" width="1" height="1" fill="#8ea39c"/><rect x="16" y="1" width="1" height="1" fill="#fbfdfc"/><rect x="15" y="3" width="1" height="1" fill="#8ea39c"/><rect x="16" y="4" width="1" height="1" fill="#fbfdfc"/><rect x="18" y="0" width="1" height="1" fill="#8ea39c"/><rect x="19" y="1" width="1" height="1" fill="#fbfdfc"/><rect x="18" y="3" width="1" height="1" fill="#8ea39c"/><rect x="19" y="4" width="1" height="1" fill="#fbfdfc"/><rect x="21" y="0" width="1" height="1" fill="#8ea39c"/><rect x="22" y="1" width="1" height="1" fill="#fbfdfc"/><rect x="21" y="3" width="1" height="1" fill="#8ea39c"/><rect x="22" y="4" width="1" height="1" fill="#fbfdfc"/><rect x="24" y="0" width="1" height="1" fill="#8ea39c"/><rect x="25" y="1" width="1" height="1" fill="#fbfdfc"/><rect x="24" y="3" width="1" height="1" fill="#8ea39c"/><rect x="25" y="4" width="1" height="1" fill="#fbfdfc"/></svg>
<div class="ab" style="left:44px;top:120px;width:1px;height:496px;background:#d2ddd8"></div>
<div class="ab" style="left:10px;top:238px;width:34px;height:36px;border:1px solid #93aba3;border-radius:4px;background:linear-gradient(180deg,#b9cbc4,#a9bfb7)"></div>
<svg style="left:15px;top:136px;" width="26" height="24" viewBox="0 0 26 24"><path d="M6.5 2.5 L18 14 L13 14.5 L16 20.5 L13.5 21.5 L10.5 15.5 L6.5 19 Z" fill="#fbfbfb" stroke="#8c8c8c" stroke-width="1.1" stroke-linejoin="round"/><ellipse cx="13" cy="22" rx="6" ry="1.6" fill="#000" opacity="0.12"/></svg>
<svg style="left:15px;top:171px;" width="26" height="26" viewBox="0 0 26 26"><path d="M1 6 H18" stroke="#9aa6a2" stroke-width="1.5"/><rect x="4.5" y="3" width="6" height="6" fill="#8fb0e0" stroke="#2a50a0" stroke-width="1.2"/><path d="M8 8 L19.5 16 L12 16.5 L9 22 Z" fill="#d8dcdc" stroke="#8c8c8c" stroke-width="1.1" stroke-linejoin="round"/><ellipse cx="13" cy="24" rx="6" ry="1.6" fill="#000" opacity="0.12"/></svg>
<svg style="left:14px;top:207px;" width="26" height="26" viewBox="0 0 26 26"><defs><linearGradient id="zg" x1="0" y1="0" x2="0" y2="1"><stop offset="0" stop-color="#c8daf0"/><stop offset="0.5" stop-color="#a9c6e8"/><stop offset="0.55" stop-color="#8fb4e0"/><stop offset="1" stop-color="#aac8ea"/></linearGradient></defs><circle cx="10.5" cy="10.5" r="8.5" fill="url(#zg)" stroke="#8a8e92" stroke-width="1.3"/><path d="M16.5 16.5 L23 23" stroke="#6a6e70" stroke-width="2.6" stroke-linecap="round"/><ellipse cx="11" cy="24" rx="8" ry="1.6" fill="#000" opacity="0.12"/></svg>
<svg style="left:18px;top:248px;" width="19" height="18" viewBox="0 0 19 18"><rect x="0.5" y="0.5" width="17" height="15" fill="#f0f0ee" stroke="#8c8c8c"/><rect x="2" y="2" width="14" height="12" fill="#fafafa"/><ellipse cx="9" cy="17" rx="7" ry="1.6" fill="#000" opacity="0.12"/></svg>
<svg style="left:16px;top:282px;" width="22" height="20" viewBox="0 0 22 20"><defs><linearGradient id="eg" x1="0" y1="0" x2="0" y2="1"><stop offset="0" stop-color="#f6f6f6"/><stop offset="1" stop-color="#dedede"/></linearGradient></defs><ellipse cx="10.5" cy="9" rx="9.5" ry="8" fill="url(#eg)" stroke="#8c8c8c" stroke-width="1.1"/><ellipse cx="10.5" cy="19" rx="7" ry="1.6" fill="#000" opacity="0.12"/></svg>
<svg style="left:15px;top:316px;" width="24" height="24" viewBox="0 0 24 24"><path d="M12 1.5 L14.8 8.5 L22 8.8 L16.4 13.4 L18.4 20.5 L12 16.5 L5.6 20.5 L7.6 13.4 L2 8.8 L9.2 8.5 Z" fill="#f2f2f2" stroke="#8c8c8c" stroke-width="1.1" stroke-linejoin="round"/><ellipse cx="12" cy="22" rx="7" ry="1.6" fill="#000" opacity="0.12"/></svg>
<svg style="left:16px;top:352px;" width="22" height="22" viewBox="0 0 22 22"><path d="M10.40 11.00 L10.33 10.91 L10.28 10.80 L10.24 10.67 L10.23 10.53 L10.24 10.39 L10.28 10.23 L10.35 10.08 L10.44 9.94 L10.57 9.80 L10.72 9.68 L10.90 9.58 L11.09 9.50 L11.31 9.46 L11.54 9.44 L11.78 9.46 L12.03 9.52 L12.27 9.62 L12.50 9.76 L12.72 9.93 L12.92 10.15 L13.09 10.39 L13.23 10.67 L13.32 10.98 L13.38 11.30 L13.39 11.64 L13.35 11.99 L13.26 12.34 L13.12 12.68 L12.92 13.00 L12.68 13.31 L12.38 13.58 L12.05 13.81 L11.67 14.00 L11.26 14.14 L10.83 14.22 L10.38 14.24 L9.92 14.20 L9.47 14.09 L9.02 13.92 L8.59 13.68 L8.19 13.37 L7.83 13.01 L7.52 12.59 L7.27 12.13 L7.07 11.62 L6.95 11.08 L6.90 10.53 L6.93 9.96 L7.04 9.38 L7.23 8.82 L7.50 8.29 L7.85 7.78 L8.27 7.33 L8.76 6.93 L9.31 6.59 L9.90 6.33 L10.54 6.15 L11.21 6.05 L11.89 6.05 L12.58 6.15 L13.25 6.34 L13.91 6.63 L14.52 7.01 L15.09 7.47 L15.59 8.02 L16.02 8.64 L16.37 9.32 L16.62 10.05 L16.77 10.82 L16.82 11.61 L16.75 12.41 L16.58 13.21 L16.29 13.98 L15.90 14.72 L15.40 15.40 L14.81 16.02 L14.13 16.55 L13.37 17.00 L12.56 17.34 L11.69 17.56 L10.79 17.67 L9.87 17.66 L8.96 17.51 L8.06 17.24 L7.20 16.85 L6.39 16.34 L5.66 15.71 L5.00 14.98 L4.45 14.17 L4.01 13.27 L3.69 12.31 L3.51 11.31 L3.46 10.29 L3.55 9.25 L3.79 8.23 L4.16 7.24 L4.68 6.30 L5.32 5.44 L6.08 4.66 L6.95 3.99 L7.91 3.43 L8.95 3.01 L10.04 2.73 L11.18 2.60 L12.33 2.63 L13.47 2.81 L14.59 3.16 L15.66 3.65 L16.66 4.30 L17.58 5.08 L18.38 5.98 L19.06 7.00 L19.60 8.11 L19.99 9.29 L20.21 10.52 L20.27 11.78 L20.15 13.05 L19.86 14.29 L19.39 15.50 L18.77 16.64" fill="none" stroke="#8a8a8a" stroke-width="2"/></svg>
<svg style="left:17px;top:389px;" width="22" height="22" viewBox="0 0 22 22"><path d="M2 19 L4 13 L16 1.5 L20 5.5 L8 17 Z" fill="#d8a050" stroke="#7a4a10" stroke-width="1"/><path d="M14 3.5 L16 1.5 L20 5.5 L18 7.5 Z" fill="#e02828"/><path d="M2 19 L4 13 L8 17 Z" fill="#f0d8a8"/><ellipse cx="11" cy="21" rx="6" ry="1.6" fill="#000" opacity="0.12"/></svg>
<svg style="left:17px;top:423px;" width="22" height="22" viewBox="0 0 22 22"><rect x="1.5" y="3.5" width="7" height="7" fill="#c8c8c8" stroke="#555" stroke-width="1.2"/><path d="M3 11 V18 M7 11 V18" stroke="#666" stroke-width="1"/><path d="M8 5 H14 Q16 5 16 8" stroke="#888" stroke-width="1.3" fill="none"/><path d="M16 8 L11 14 L13 17 H19 L21 14 Z" fill="#f4e060" stroke="#a08820" stroke-width="1"/><rect x="13" y="16.5" width="6" height="4" fill="#3060b0"/></svg>
<svg style="left:14px;top:458px;" width="25" height="24" viewBox="0 0 25 24"><path d="M4 21 Q8 12 14 7 Q19 2 23 2 Q23 8 18 13 Q12 18 5 20 Z" fill="#e8b8a0" stroke="#a05a20" stroke-width="1.1"/><path d="M2 23 L6 19" stroke="#111" stroke-width="2.5"/></svg>
<div class="t" style="left:16px;top:495px;font-size:26px;color:#111;font-weight:bold;text-shadow:0 2px 2px rgba(0,0,0,0.25)">A</div>
<svg style="left:14px;top:531px;" width="26" height="26" viewBox="0 0 26 26"><rect x="15.5" y="1.5" width="9" height="8" fill="#f4f4f4" stroke="#8c8c8c"/><rect x="1.5" y="16.5" width="9" height="8" fill="#f4f4f4" stroke="#8c8c8c"/><rect x="15.5" y="16.5" width="9" height="8" fill="#f4f4f4" stroke="#8c8c8c"/><path d="M6 16 L9 5 H15 M20 10 V16" stroke="#555" stroke-width="1.1" fill="none"/></svg>
<svg style="left:18px;top:571px;" width="19" height="19" viewBox="0 0 19 19"><defs><linearGradient id="gg" x1="0" y1="0" x2="1" y2="1"><stop offset="0" stop-color="#3a3a3a"/><stop offset="1" stop-color="#e6e6e6"/></linearGradient></defs><rect x="0.5" y="0.5" width="17" height="17" fill="url(#gg)" stroke="#555"/><ellipse cx="9" cy="18.5" rx="7" ry="1.6" fill="#000" opacity="0.12"/></svg>
<svg style="left:17px;top:604px;" width="22" height="24" viewBox="0 0 22 24"><path d="M7 16 L16 6" stroke="#7aa4dc" stroke-width="3.2" stroke-linecap="round"/><path d="M6.5 16.5 L15.5 6.5" stroke="#c8dcf4" stroke-width="1"/><path d="M14 5 L17.5 1.8 Q20.5 0.5 20.5 3.5 L17.5 7.5 Z" fill="#1d3f8a"/><path d="M4.5 16.5 Q1.5 20.5 3 22 Q5.5 23.5 6.5 20 Z" fill="#2a5ab0"/><circle cx="3.8" cy="20.5" r="0.9" fill="#fff"/></svg>
<div class="ab" style="left:61px;top:136px;width:800px;height:484px;background:#fff"></div>
<div class="ab" style="left:339.5px;top:200.5px;width:254px;height:346px;background:#aa86eb;filter:blur(28px)"></div>
<div class="ab" style="left:332px;top:191px;width:261px;height:369px;border:1px solid #858097"></div>
<div class="ab" style="left:593px;top:193px;width:2px;height:369px;background:#706a80"></div>
<div class="ab" style="left:334px;top:560px;width:261px;height:2px;background:#706a80"></div>
<svg style="left:339px;top:200px;" width="256" height="348" viewBox="0 0 256 348"><rect x="0.5" y="0.5" width="254" height="346" fill="none" stroke="#555" stroke-dasharray="4 4"/><path d="M254.5 4 V346" stroke="#8f9a6c" stroke-dasharray="4 4"/></svg>
<svg style="left:335px;top:196px;" width="9" height="9" viewBox="0 0 9 9"><rect x="0.5" y="0.5" width="8" height="8" fill="#fff" stroke="#000"/></svg>
<svg style="left:589px;top:196px;" width="9" height="9" viewBox="0 0 9 9"><circle cx="4.5" cy="4.5" r="4" fill="#fff" stroke="#000"/></svg>
<svg style="left:589px;top:228px;" width="9" height="9" viewBox="0 0 9 9"><circle cx="4.5" cy="4.5" r="4" fill="#fff" stroke="#000"/></svg>
<div class="ab" style="left:861px;top:138px;width:15px;height:480px;border:1px solid #7e9a91;border-radius:4px;background:#c6d4ce"></div>
<div class="ab" style="left:862px;top:139px;width:13px;height:13px;border-bottom:1px solid #9fb4ad;border-radius:3px 3px 0 0;background:linear-gradient(90deg,#f2f6f4,#dfe8e4)"></div>
<svg style="left:864px;top:143px;" width="9" height="5" viewBox="0 0 9 5"><path d="M0.5 4.5 L4.5 0.5 L8.5 4.5 Z" fill="#000"/></svg>
<div class="ab" style="left:862px;top:286px;width:13px;height:169px;background:linear-gradient(90deg,#dcefe6 0,#c9e5d8 45%,#b6dbc9 55%,#cde7db 100%);border-top:1px solid #7eab98;border-bottom:1px solid #7eab98"></div>
<div class="ab" style="left:865px;top:367px;width:7px;height:1px;background:#6f9d8a"></div>
<div class="ab" style="left:865px;top:370px;width:7px;height:1px;background:#6f9d8a"></div>
<div class="ab" style="left:865px;top:373px;width:7px;height:1px;background:#6f9d8a"></div>
<div class="ab" style="left:862px;top:590px;width:13px;height:14px;border-top:1px solid #8fa8a0;background:linear-gradient(90deg,#f2f6f4,#dfe8e4)"></div>
<div class="ab" style="left:862px;top:604px;width:13px;height:14px;border-top:1px solid #a9bcb5;border-radius:0 0 3px 3px;background:linear-gradient(90deg,#f2f6f4,#dfe8e4)"></div>
<svg style="left:864px;top:594px;" width="9" height="5" viewBox="0 0 9 5"><path d="M0.5 4.5 L4.5 0.5 L8.5 4.5 Z" fill="#000"/></svg>
<svg style="left:864px;top:609px;" width="9" height="5" viewBox="0 0 9 5"><path d="M0.5 0.5 L4.5 4.5 L8.5 0.5 Z" fill="#000"/></svg>
<div class="ab" style="left:61px;top:619px;width:800px;height:15px;border:1px solid #7e9a91;border-radius:4px;background:#c6d4ce"></div>
<div class="ab" style="left:62px;top:620px;width:13px;height:13px;border-right:1px solid #9fb4ad;border-radius:3px 0 0 3px;background:linear-gradient(180deg,#f2f6f4,#dfe8e4)"></div>
<svg style="left:66px;top:622px;" width="5" height="9" viewBox="0 0 5 9"><path d="M4.5 0.5 L0.5 4.5 L4.5 8.5 Z" fill="#000"/></svg>
<div class="ab" style="left:120px;top:620px;width:660px;height:13px;background:linear-gradient(180deg,#dcefe6 0,#cbe6da 50%,#b8dccb 60%,#c8e4d7 100%);border-left:1px solid #7eab98"></div>
<div class="ab" style="left:447px;top:623px;width:1px;height:7px;background:#6f9d8a"></div>
<div class="ab" style="left:450px;top:623px;width:1px;height:7px;background:#6f9d8a"></div>
<div class="ab" style="left:453px;top:623px;width:1px;height:7px;background:#6f9d8a"></div>
<div class="ab" style="left:11px;top:635px;width:16px;height:16px;background:#000000"></div>
<div class="ab" style="left:27px;top:635px;width:16px;height:16px;background:#1a1a1a"></div>
<div class="ab" style="left:43px;top:635px;width:16px;height:16px;background:#333333"></div>
<div class="ab" style="left:59px;top:635px;width:16px;height:16px;background:#4d4d4d"></div>
<div class="ab" style="left:75px;top:635px;width:16px;height:16px;background:#666666"></div>
<div class="ab" style="left:91px;top:635px;width:16px;height:16px;background:#808080"></div>
<div class="ab" style="left:107px;top:635px;width:16px;height:16px;background:#999999"></div>
<div class="ab" style="left:123px;top:635px;width:16px;height:16px;background:#b3b3b3"></div>
<div class="ab" style="left:139px;top:635px;width:16px;height:16px;background:#cccccc"></div>
<div class="ab" style="left:155px;top:635px;width:16px;height:16px;background:#e6e6e6"></div>
<div class="ab" style="left:171px;top:635px;width:16px;height:16px;background:#ececec"></div>
<div class="ab" style="left:187px;top:635px;width:16px;height:16px;background:#f2f2f2"></div>
<div class="ab" style="left:203px;top:635px;width:16px;height:16px;background:#f9f9f9"></div>
<div class="ab" style="left:219px;top:635px;width:16px;height:16px;background:#ffffff"></div>
<div class="ab" style="left:235px;top:635px;width:16px;height:16px;background:#800000"></div>
<div class="ab" style="left:251px;top:635px;width:16px;height:16px;background:#ff0000"></div>
<div class="ab" style="left:267px;top:635px;width:16px;height:16px;background:#808000"></div>
<div class="ab" style="left:283px;top:635px;width:16px;height:16px;background:#ffff00"></div>
<div class="ab" style="left:299px;top:635px;width:16px;height:16px;background:#008000"></div>
<div class="ab" style="left:315px;top:635px;width:16px;height:16px;background:#00ff00"></div>
<div class="ab" style="left:331px;top:635px;width:16px;height:16px;background:#008080"></div>
<div class="ab" style="left:347px;top:635px;width:16px;height:16px;background:#00ffff"></div>
<div class="ab" style="left:363px;top:635px;width:16px;height:16px;background:#000080"></div>
<div class="ab" style="left:379px;top:635px;width:16px;height:16px;background:#0000ff"></div>
<div class="ab" style="left:395px;top:635px;width:16px;height:16px;background:#800080"></div>
<div class="ab" style="left:411px;top:635px;width:16px;height:16px;background:#ff00ff"></div>
<div class="ab" style="left:427px;top:635px;width:16px;height:16px;background:#2b0000"></div>
<div class="ab" style="left:443px;top:635px;width:16px;height:16px;background:#550000"></div>
<div class="ab" style="left:459px;top:635px;width:16px;height:16px;background:#800000"></div>
<div class="ab" style="left:10px;top:655px;width:851px;height:15px;border:1px solid #7e9a91;border-radius:4px;background:#c6d4ce"></div>
<div class="ab" style="left:11px;top:656px;width:13px;height:13px;border-right:1px solid #9fb4ad;border-radius:3px 0 0 3px;background:linear-gradient(180deg,#f2f6f4,#dfe8e4)"></div>
<svg style="left:15px;top:658px;" width="5" height="9" viewBox="0 0 5 9"><path d="M4.5 0.5 L0.5 4.5 L4.5 8.5 Z" fill="#000"/></svg>
<div class="ab" style="left:24px;top:656px;width:99px;height:13px;background:linear-gradient(180deg,#dcefe6 0,#cbe6da 50%,#b8dccb 60%,#c8e4d7 100%);border-left:1px solid #7eab98;border-right:1px solid #7eab98"></div>
<div class="ab" style="left:71px;top:659px;width:1px;height:7px;background:#6f9d8a"></div>
<div class="ab" style="left:74px;top:659px;width:1px;height:7px;background:#6f9d8a"></div>
<div class="ab" style="left:77px;top:659px;width:1px;height:7px;background:#6f9d8a"></div>
<div class="btn" style="left:862px;top:635px;width:17px;height:18px"></div>
<svg style="left:867px;top:639px;" width="5" height="9" viewBox="0 0 5 9"><path d="M4.5 0.5 L0.5 4.5 L4.5 8.5 Z" fill="#000"/></svg>
<div class="ab" style="left:831px;top:656px;width:14px;height:13px;border-left:1px solid #9fb4ad;background:linear-gradient(180deg,#f2f6f4,#dfe8e4)"></div>
<div class="ab" style="left:845px;top:656px;width:15px;height:13px;border-left:1px solid #9fb4ad;border-radius:0 3px 3px 0;background:linear-gradient(180deg,#f2f6f4,#dfe8e4)"></div>
<div class="t" style="left:14px;top:672px;font-size:11px;color:#000;">З:</div>
<div class="t" style="left:13px;top:683px;font-size:11px;color:#000;">Ш:</div>
<div class="ab" style="left:28px;top:671px;width:76px;height:12px;background:#aa86eb"></div>
<div class="t" style="left:57px;top:683px;font-size:11px;color:#000;letter-spacing:-0.07px;">Нет</div>
<div class="t" style="left:109px;top:677px;font-size:10px;color:#000;">Н:</div>
<div class="ent" style="left:120px;top:672px;width:27px;height:23px"></div>
<div class="ab" style="left:146px;top:672px;width:12px;height:23px;border:1px solid #7e9a91;border-radius:0 3px 3px 0;overflow:hidden"><div style="height:50%;background:linear-gradient(180deg,#f4f7f5,#dbe4e0)"></div><div style="height:50%;border-top:1px solid #a5bab3;background:linear-gradient(180deg,#f4f7f5,#dbe4e0)"></div></div>
<svg style="left:148px;top:672px;" width="7" height="23" viewBox="0 0 7 23"><path d="M0 7.8 L3.5 3.8 L7 7.8 Z" fill="#b8c7c1"/><path d="M0 15.2 L3.5 19.2 L7 15.2 Z" fill="#000"/></svg>
<div class="t" style="left:126px;top:678px;font-size:10px;color:#000;">100</div>
<div class="ab" style="left:160px;top:672px;width:1px;height:21px;background:#a3b6af"></div>
<svg style="left:164px;top:676px;" width="14" height="10" viewBox="0 0 14 10"><ellipse cx="7" cy="5" rx="6.5" ry="4" fill="#f4e8c8" stroke="#b08040"/><circle cx="7" cy="5" r="2.6" fill="#2a6fd0"/></svg>
<svg style="left:185px;top:674px;" width="11" height="15" viewBox="0 0 11 15"><path d="M2.5 7 V4.5 A3 3 0 0 1 8.5 4.5 V7" stroke="#9a9a9a" stroke-width="1.6" fill="none"/><rect x="0.5" y="6.5" width="10" height="8" rx="1" fill="#f2d424" stroke="#a88a00"/></svg>
<div class="btn" style="left:198px;top:672px;width:80px;height:30px"></div>
<div class="t" style="left:203px;top:677px;font-size:11px;color:#000;font-weight:bold;letter-spacing:0.20px;-webkit-text-stroke:0.2px #000">•Layer 1</div>
<div class="ab" style="left:257px;top:676px;width:1px;height:18px;background:#a3b6af"></div>
<svg style="left:263px;top:678px;" width="9" height="13" viewBox="0 0 9 13"><path d="M0.5 5 L4.5 0.5 L8.5 5 Z M0.5 8 L4.5 12.5 L8.5 8 Z" fill="#000"/></svg>
<div class="ab" style="left:744px;top:672px;width:1px;height:21px;background:#a3b6af"></div>
<div class="t" style="left:747px;top:671px;font-size:10px;color:#000;letter-spacing:0.02px;">X: 614,29</div>
<div class="t" style="left:747px;top:683px;font-size:10px;color:#000;letter-spacing:0.09px;">Y: 888,57</div>
<div class="t" style="left:793px;top:677px;font-size:10px;color:#000;">Z:</div>
<div class="ent" style="left:803px;top:673px;width:47px;height:23px"></div>
<div class="ab" style="left:849px;top:673px;width:11px;height:23px;border:1px solid #7e9a91;border-radius:0 3px 3px 0;overflow:hidden"><div style="height:50%;background:linear-gradient(180deg,#f4f7f5,#dbe4e0)"></div><div style="height:50%;border-top:1px solid #a5bab3;background:linear-gradient(180deg,#f4f7f5,#dbe4e0)"></div></div>
<svg style="left:851px;top:673px;" width="7" height="23" viewBox="0 0 7 23"><path d="M0 7.8 L3.5 3.8 L7 7.8 Z" fill="#000"/><path d="M0 15.2 L3.5 19.2 L7 15.2 Z" fill="#000"/></svg>
<div class="t" style="left:814px;top:677px;font-size:10px;color:#000;letter-spacing:-0.26px;">35%</div>
<svg style="left:862px;top:676px;" width="18" height="17" viewBox="0 0 18 17"><path d="M17 2 L2 17 M17 6 L6 17 M17 10 L10 17 M17 14 L14 17" stroke="#8fa69e" stroke-width="1"/></svg>
<div class="ab" style="left:453px;top:249px;width:409px;height:414px;background:#e2eae6;border:1px solid #6f8c83;border-radius:3px 3px 0 0;box-shadow:inset 1px 1px 0 #f4f8f6"></div>
<div class="ab" style="left:454px;top:273px;width:3px;height:389px;background:#e4f5ec"></div>
<div class="ab" style="left:453px;top:663px;width:409px;height:1px;background:#a3b8b0"></div>
<div class="ab" style="left:454px;top:250px;width:407px;height:24px;background:linear-gradient(180deg,#e6ede9 0,#dde9e3 50%,#dff1e8 100%);border-radius:2px 2px 0 0"></div>
<svg style="left:460px;top:254px;" width="16" height="16" viewBox="0 0 16 16"><path d="M8 0.5 L15 7.5 Q13 9 11 8.5 L12 10.5 L9.5 10.5 L10 13 Q8 15.5 6.5 13 L7 11 L3.5 11.5 L5 9 Q2 9 1 7.5 Z" fill="#000"/><path d="M8 1.2 L10.8 4 Q9 5 8 4.2 Q7 5 5.2 4 Z" fill="#fff"/><path d="M2 10 H6 M10 11.5 H14" stroke="#000" stroke-width="1"/></svg>
<div class="t" style="left:485px;top:257px;font-size:12px;color:#8c9994;font-weight:bold;letter-spacing:0.77px;-webkit-text-stroke:0.45px #8c9994;text-shadow:0 1px 1px #fff">Заливка и штрих (Shift+Ctrl+F)</div>
<div class="btn" style="left:818px;top:254px;width:18px;height:18px;opacity:0.8"></div>
<div class="ab" style="left:823px;top:259px;width:9px;height:8px;border:1.5px solid #7a8a84;border-top-width:2px"></div>
<div class="btn" style="left:838px;top:254px;width:18px;height:18px;opacity:0.8"></div>
<svg style="left:842px;top:258px;" width="10" height="10" viewBox="0 0 10 10"><path d="M1 1 L9 9 M9 1 L1 9" stroke="#7a8a84" stroke-width="2"/></svg>
<div class="ab" style="left:457px;top:298px;width:401px;height:277px;border:1px solid #7f9b92;border-radius:0 3px 3px 3px;background:#e2eae6;box-shadow:inset 1px 0 0 #fbfdfc"></div>
<div class="ab" style="left:539px;top:277px;width:113px;height:21px;border:1px solid #8aa59c;border-bottom:none;border-radius:3px 3px 0 0;background:linear-gradient(180deg,#dbe5e1,#cfdbd6)"></div>
<div class="ab" style="left:652px;top:277px;width:117px;height:21px;border:1px solid #8aa59c;border-bottom:none;border-radius:3px 3px 0 0;background:linear-gradient(180deg,#dbe5e1,#cfdbd6)"></div>
<div class="ab" style="left:457px;top:274px;width:83px;height:25px;border:1px solid #7fb8a2;border-bottom:none;border-radius:3px 3px 0 0;background:linear-gradient(180deg,#f4f8f6,#e4ece8)"></div>
<svg style="left:463px;top:281px;" width="13" height="13" viewBox="0 0 13 13"><path d="M0.8 4.5 Q0.8 3.5 2 3.5 H3.5 V9 Q3.5 10 2 10 Q0.8 10 0.8 9 Z" fill="#7e9fe0" stroke="#4a6ab8" stroke-width="0.6"/><path d="M3.5 5 L8 2 L12 9 L7.5 12 Z" fill="#f2f2f2" stroke="#7a7e84" stroke-width="0.9"/><path d="M5.5 3.5 Q7 0 9 2.5" stroke="#777" stroke-width="0.9" fill="none"/><circle cx="7.5" cy="6.5" r="1" fill="#666"/></svg>
<div class="t" style="left:478px;top:282px;font-size:12px;color:#000;letter-spacing:0.52px;">З<u>а</u>ливка</div>
<svg style="left:546px;top:281px;" width="12" height="13" viewBox="0 0 12 13"><path d="M2 9.5 V4 Q2 1 5 1 Q8 1 8 4 V5.5" stroke="#e02020" stroke-width="2" fill="none"/><path d="M0 7 L2 10.5 L4 7 Z" fill="#e02020"/><path d="M6.5 6 L9.5 6 L11 9 L9.5 12 H6.5 L5 9 Z" fill="#f2cc30" stroke="#a08000" stroke-width="0.6"/><rect x="6.3" y="10" width="3.4" height="2.5" fill="#3a6ad0"/></svg>
<div class="t" style="left:560px;top:282px;font-size:12px;color:#000;letter-spacing:0.70px;">Цвет <u>ш</u>триха</div>
<svg style="left:658px;top:281px;" width="12" height="13" viewBox="0 0 12 13"><path d="M2 9.5 V4 Q2 1 5 1 Q8 1 8 4 V5.5" stroke="#e02020" stroke-width="2" fill="none"/><path d="M0 7 L2 10.5 L4 7 Z" fill="#e02020"/><path d="M6.5 6 L9.5 6 L11 9 L9.5 12 H6.5 L5 9 Z" fill="#f2cc30" stroke="#a08000" stroke-width="0.6"/><rect x="6.3" y="10" width="3.4" height="2.5" fill="#3a6ad0"/></svg>
<div class="t" style="left:671px;top:282px;font-size:12px;color:#000;letter-spacing:0.54px;"><u>С</u>тиль штриха</div>
<svg style="left:469px;top:311px;" width="14" height="14" viewBox="0 0 14 14"><rect x="0.5" y="0.5" width="13" height="13" fill="#fafafa" stroke="#888"/><path d="M3 11 L11 3" stroke="#e00000" stroke-width="1.6"/></svg>
<div class="ab" style="left:489px;top:304px;width:26px;height:28px;border:1px solid #8aa59c;border-radius:4px;background:linear-gradient(180deg,#b7cac3,#a9bfb7)"></div>
<svg style="left:496px;top:312px;" width="14" height="14" viewBox="0 0 14 14"><rect x="0.5" y="0.5" width="13" height="13" fill="#c8c8c4" stroke="#777"/></svg>
<svg style="left:522px;top:312px;" width="14" height="14" viewBox="0 0 14 14"><defs><linearGradient id="lg1"><stop offset="0" stop-color="#555"/><stop offset="1" stop-color="#eee"/></linearGradient></defs><rect x="0.5" y="0.5" width="13" height="13" fill="url(#lg1)" stroke="#777"/></svg>
<svg style="left:547px;top:312px;" width="14" height="14" viewBox="0 0 14 14"><defs><radialGradient id="rg1"><stop offset="0" stop-color="#fff"/><stop offset="1" stop-color="#888"/></radialGradient></defs><rect x="0.5" y="0.5" width="13" height="13" fill="url(#rg1)" stroke="#777"/></svg>
<svg style="left:573px;top:311px;" width="14" height="14" viewBox="0 0 14 14"><rect x="0.5" y="0.5" width="13" height="13" fill="#fff" stroke="#c00"/><circle cx="7" cy="7" r="3" fill="#e00"/><path d="M0 3 L3 0 M11 0 L14 3 M0 11 L3 14 M11 14 L14 11" stroke="#e00" stroke-width="2.5"/></svg>
<div class="t" style="left:600px;top:311px;font-size:16px;color:#333;font-weight:bold;">?</div>
<div class="ab" style="left:812px;top:304px;width:20px;height:28px;border:1px solid #8aa59c;border-radius:4px;background:linear-gradient(180deg,#b7cac3,#a9bfb7)"></div>
<svg style="left:816px;top:312px;" width="13" height="12" viewBox="0 0 13 12"><path d="M1 1 Q6.5 4 12 1 L12 7 Q12 11 6.5 11 Q1 11 1 7 Z" fill="#000"/><circle cx="6.5" cy="7" r="2.5" fill="#b0c4bc"/></svg>
<svg style="left:836px;top:312px;" width="13" height="12" viewBox="0 0 13 12"><path d="M1 1 Q6.5 4 12 1 L12 7 Q12 11 6.5 11 Q1 11 1 7 Z" fill="#000"/></svg>
<div class="ab" style="left:459px;top:343px;width:397px;height:231px;border:1px solid #8fa89f;border-radius:4px"></div>
<div class="ab" style="left:465px;top:340px;width:90px;height:6px;background:#e2eae6"></div>
<div class="t" style="left:470px;top:337px;font-size:12px;color:#000;letter-spacing:0.43px;">Плоский цвет</div>
<div class="ab" style="left:465px;top:375px;width:385px;height:172px;border:1px solid #7f9b92;border-radius:0 3px 3px 3px;background:#e3ebe7;box-shadow:inset 1px 0 0 #fbfdfc"></div>
<div class="ab" style="left:506px;top:354px;width:39px;height:21px;border:1px solid #8aa59c;border-bottom:none;border-radius:3px 3px 0 0;background:linear-gradient(180deg,#dbe5e1,#cfdbd6)"></div>
<div class="t" style="left:514px;top:358px;font-size:11.5px;color:#000;letter-spacing:-0.34px;">HSL</div>
<div class="ab" style="left:544px;top:354px;width:48px;height:21px;border:1px solid #8aa59c;border-bottom:none;border-radius:3px 3px 0 0;background:linear-gradient(180deg,#dbe5e1,#cfdbd6)"></div>
<div class="t" style="left:552px;top:358px;font-size:11.5px;color:#000;letter-spacing:-0.84px;">CMYK</div>
<div class="ab" style="left:591px;top:354px;width:44px;height:21px;border:1px solid #8aa59c;border-bottom:none;border-radius:3px 3px 0 0;background:linear-gradient(180deg,#dbe5e1,#cfdbd6)"></div>
<div class="t" style="left:599px;top:358px;font-size:11.5px;color:#000;letter-spacing:0.79px;">Круг</div>
<div class="ab" style="left:465px;top:351px;width:42px;height:25px;border:1px solid #7fb8a2;border-bottom:none;border-radius:3px 3px 0 0;background:linear-gradient(180deg,#f6faf8,#e6eeea)"></div>
<div class="t" style="left:474px;top:358px;font-size:11.5px;color:#000;letter-spacing:-0.86px;">RGB</div>
<div class="t" style="left:472px;top:385px;font-size:11px;color:#000;"><u>R</u></div>
<div class="ab" style="left:488px;top:378px;width:296px;height:24px;border:1px solid #000;background:linear-gradient(90deg,rgb(0,134,235),rgb(255,134,235))"></div>
<div class="ab" style="left:489px;top:379px;width:294px;height:22px;overflow:hidden"><svg style="left:191.0px;top:0" width="10" height="22" viewBox="0 0 10 22"><path d="M0.5 -0.5 L5 4.5 L9.5 -0.5 M0.5 22.5 L5 17.5 L9.5 22.5" fill="#000" stroke="#fff" stroke-width="1"/></svg></div>
<div class="ent" style="left:792px;top:378px;width:40px;height:24px"></div>
<div class="ab" style="left:831px;top:378px;width:13px;height:24px;border:1px solid #7e9a91;border-radius:0 3px 3px 0;overflow:hidden"><div style="height:50%;background:linear-gradient(180deg,#f4f7f5,#dbe4e0)"></div><div style="height:50%;border-top:1px solid #a5bab3;background:linear-gradient(180deg,#f4f7f5,#dbe4e0)"></div></div>
<svg style="left:834px;top:378px;" width="7" height="24" viewBox="0 0 7 24"><path d="M0 8.0 L3.5 4.0 L7 8.0 Z" fill="#000"/><path d="M0 16.0 L3.5 20.0 L7 16.0 Z" fill="#000"/></svg>
<div class="t" style="left:797px;top:385px;font-size:11px;color:#000;letter-spacing:0.57px;">170</div>
<div class="t" style="left:472px;top:411px;font-size:11px;color:#000;"><u>G</u></div>
<div class="ab" style="left:488px;top:404px;width:296px;height:24px;border:1px solid #000;background:linear-gradient(90deg,rgb(170,0,235),rgb(170,255,235))"></div>
<div class="ab" style="left:489px;top:405px;width:294px;height:22px;overflow:hidden"><svg style="left:149.5px;top:0" width="10" height="22" viewBox="0 0 10 22"><path d="M0.5 -0.5 L5 4.5 L9.5 -0.5 M0.5 22.5 L5 17.5 L9.5 22.5" fill="#000" stroke="#fff" stroke-width="1"/></svg></div>
<div class="ent" style="left:792px;top:404px;width:40px;height:24px"></div>
<div class="ab" style="left:831px;top:404px;width:13px;height:24px;border:1px solid #7e9a91;border-radius:0 3px 3px 0;overflow:hidden"><div style="height:50%;background:linear-gradient(180deg,#f4f7f5,#dbe4e0)"></div><div style="height:50%;border-top:1px solid #a5bab3;background:linear-gradient(180deg,#f4f7f5,#dbe4e0)"></div></div>
<svg style="left:834px;top:404px;" width="7" height="24" viewBox="0 0 7 24"><path d="M0 8.0 L3.5 4.0 L7 8.0 Z" fill="#000"/><path d="M0 16.0 L3.5 20.0 L7 16.0 Z" fill="#000"/></svg>
<div class="t" style="left:797px;top:411px;font-size:11px;color:#000;letter-spacing:0.57px;">134</div>
<div class="t" style="left:472px;top:437px;font-size:11px;color:#000;"><u>B</u></div>
<div class="ab" style="left:488px;top:430px;width:296px;height:24px;border:1px solid #000;background:linear-gradient(90deg,rgb(170,134,0),rgb(170,134,255))"></div>
<div class="ab" style="left:489px;top:431px;width:294px;height:22px;overflow:hidden"><svg style="left:265.9px;top:0" width="10" height="22" viewBox="0 0 10 22"><path d="M0.5 -0.5 L5 4.5 L9.5 -0.5 M0.5 22.5 L5 17.5 L9.5 22.5" fill="#000" stroke="#fff" stroke-width="1"/></svg></div>
<div class="ent" style="left:792px;top:430px;width:40px;height:24px"></div>
<div class="ab" style="left:831px;top:430px;width:13px;height:24px;border:1px solid #7e9a91;border-radius:0 3px 3px 0;overflow:hidden"><div style="height:50%;background:linear-gradient(180deg,#f4f7f5,#dbe4e0)"></div><div style="height:50%;border-top:1px solid #a5bab3;background:linear-gradient(180deg,#f4f7f5,#dbe4e0)"></div></div>
<svg style="left:834px;top:430px;" width="7" height="24" viewBox="0 0 7 24"><path d="M0 8.0 L3.5 4.0 L7 8.0 Z" fill="#000"/><path d="M0 16.0 L3.5 20.0 L7 16.0 Z" fill="#000"/></svg>
<div class="t" style="left:797px;top:437px;font-size:11px;color:#000;letter-spacing:0.57px;">235</div>
<div class="t" style="left:472px;top:463px;font-size:11px;color:#000;"><u>A</u></div>
<div class="ab" style="left:488px;top:456px;width:296px;height:24px;border:1px solid #000;background:linear-gradient(90deg,rgba(170,134,235,0),rgba(170,134,235,1)),repeating-conic-gradient(#5e5e5e 0 25%,#9a9a9a 0 50%) 0 0/16px 16px"></div>
<div class="ab" style="left:489px;top:457px;width:294px;height:22px;overflow:hidden"><svg style="left:289.0px;top:0" width="10" height="22" viewBox="0 0 10 22"><path d="M0.5 -0.5 L5 4.5 L9.5 -0.5 M0.5 22.5 L5 17.5 L9.5 22.5" fill="#000" stroke="#fff" stroke-width="1"/></svg></div>
<div class="ent" style="left:792px;top:456px;width:40px;height:24px"></div>
<div class="ab" style="left:831px;top:456px;width:13px;height:24px;border:1px solid #7e9a91;border-radius:0 3px 3px 0;overflow:hidden"><div style="height:50%;background:linear-gradient(180deg,#f4f7f5,#dbe4e0)"></div><div style="height:50%;border-top:1px solid #a5bab3;background:linear-gradient(180deg,#f4f7f5,#dbe4e0)"></div></div>
<svg style="left:834px;top:456px;" width="7" height="24" viewBox="0 0 7 24"><path d="M0 8.0 L3.5 4.0 L7 8.0 Z" fill="#b8c7c1"/><path d="M0 16.0 L3.5 20.0 L7 16.0 Z" fill="#000"/></svg>
<div class="t" style="left:797px;top:463px;font-size:11px;color:#000;letter-spacing:0.57px;">255</div>
<div class="t" style="left:763px;top:557px;font-size:10px;color:#000;letter-spacing:-0.03px;">RGBA<u>:</u></div>
<div class="ab" style="left:795px;top:550px;width:55px;height:21px;background:#fff;border:1px solid #7e9a91;border-radius:3px"></div>
<div class="t" style="left:800px;top:556px;font-size:10px;color:#000;letter-spacing:0.32px;">aa86ebff</div>
<div class="t" style="left:461px;top:578px;font-size:12px;color:#000;letter-spacing:0.43px;"><u>Р</u>азмывание, %</div>
<div class="ab" style="left:463px;top:600px;width:327px;height:6px;border:1px solid #8fb0a4;border-radius:3px;background:linear-gradient(180deg,#d8e6e0,#eef4f1)"></div>
<svg style="left:518px;top:596px;" width="13" height="16" viewBox="0 0 13 16"><path d="M1.5 3 Q1.5 0.5 4 0.5 H9 Q11.5 0.5 11.5 3 V10 L6.5 15 L1.5 10 Z" fill="#cfe5da" stroke="#7fa898"/></svg>
<div class="ent" style="left:801px;top:592px;width:45px;height:24px"></div>
<div class="ab" style="left:845px;top:592px;width:13px;height:24px;border:1px solid #7e9a91;border-radius:0 3px 3px 0;overflow:hidden"><div style="height:50%;background:linear-gradient(180deg,#f4f7f5,#dbe4e0)"></div><div style="height:50%;border-top:1px solid #a5bab3;background:linear-gradient(180deg,#f4f7f5,#dbe4e0)"></div></div>
<svg style="left:848px;top:592px;" width="7" height="24" viewBox="0 0 7 24"><path d="M0 8.0 L3.5 4.0 L7 8.0 Z" fill="#000"/><path d="M0 16.0 L3.5 20.0 L7 16.0 Z" fill="#000"/></svg>
<div class="t" style="left:806px;top:599px;font-size:11px;color:#000;letter-spacing:0.76px;">18,0</div>
<div class="t" style="left:461px;top:621px;font-size:12px;color:#000;letter-spacing:0.37px;">О<u>б</u>щая прозрачность, %</div>
<div class="ab" style="left:463px;top:642px;width:327px;height:6px;border:1px solid #8fb0a4;border-radius:3px;background:linear-gradient(180deg,#d8e6e0,#eef4f1)"></div>
<svg style="left:779px;top:638px;" width="13" height="16" viewBox="0 0 13 16"><path d="M1.5 3 Q1.5 0.5 4 0.5 H9 Q11.5 0.5 11.5 3 V10 L6.5 15 L1.5 10 Z" fill="#cfe5da" stroke="#7fa898"/></svg>
<div class="ent" style="left:801px;top:635px;width:45px;height:23px"></div>
<div class="ab" style="left:845px;top:635px;width:13px;height:23px;border:1px solid #7e9a91;border-radius:0 3px 3px 0;overflow:hidden"><div style="height:50%;background:linear-gradient(180deg,#f4f7f5,#dbe4e0)"></div><div style="height:50%;border-top:1px solid #a5bab3;background:linear-gradient(180deg,#f4f7f5,#dbe4e0)"></div></div>
<svg style="left:848px;top:635px;" width="7" height="23" viewBox="0 0 7 23"><path d="M0 7.8 L3.5 3.8 L7 7.8 Z" fill="#b8c7c1"/><path d="M0 15.2 L3.5 19.2 L7 15.2 Z" fill="#000"/></svg>
<div class="t" style="left:806px;top:640px;font-size:11px;color:#000;letter-spacing:0.79px;">100,0</div>
</body></html>
